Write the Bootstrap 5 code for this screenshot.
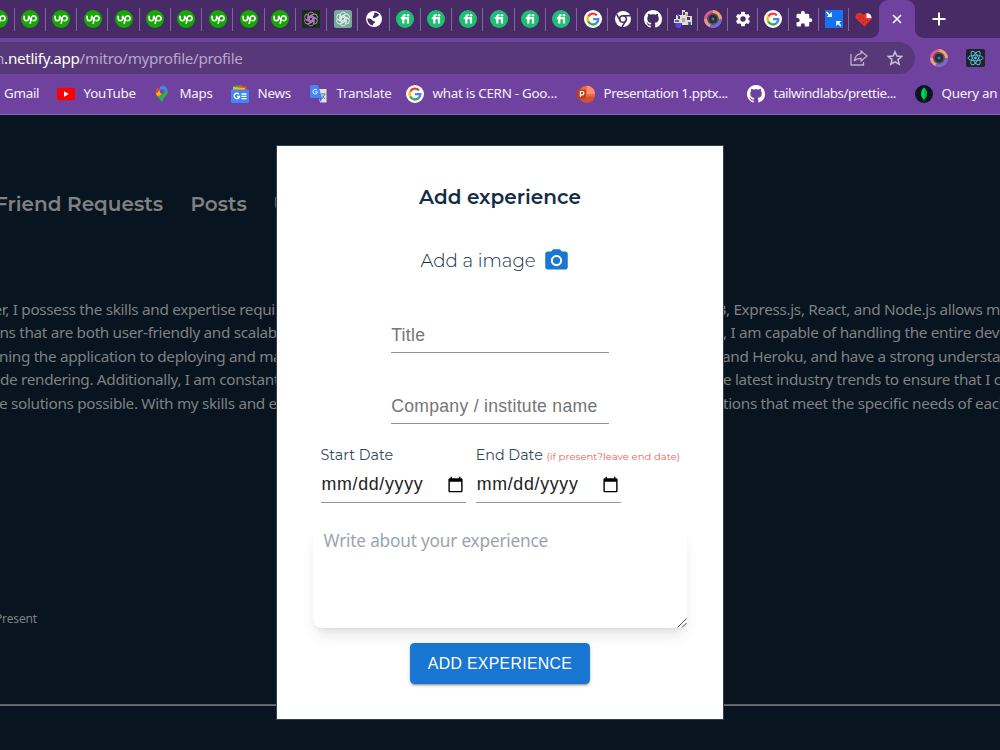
<!DOCTYPE html>
<html lang="en">
<head>
<meta charset="utf-8">
<meta name="viewport" content="width=device-width, initial-scale=1">
<title>Mitro - Profile</title>
<link href="https://cdn.jsdelivr.net/npm/bootstrap@5.3.0/dist/css/bootstrap.min.css" rel="stylesheet">
<style>
  body{width:1000px;height:750px;overflow:hidden;background:#08141f;font-family:"Noto Sans","Open Sans",sans-serif;color:#7f8184}
  svg{display:block;flex:none}
  .mont{font-family:Montserrat,Inter,"Noto Sans",sans-serif}
  .arial{font-family:"Liberation Sans",Arial,sans-serif}
  /* browser chrome */
  .tabstrip{height:38px;background:#472a66}
  .tabstrip .tabs{margin-left:-16.7px}
  .tab-i{width:31.25px;height:38px;position:relative}
  .tab-i.nar{width:30.04px}
  .tab-i::after{content:"";position:absolute;right:0;top:8px;width:1px;height:23px;background:#7d6698}
  .tab-i.last::after{display:none}
  .fav{width:18px;height:18px}
  .active-tab{width:36px;height:38px;background:#6f42a0;border-radius:9px 9px 0 0;position:relative}
  .active-tab::before,.active-tab::after{content:"";position:absolute;bottom:0;width:8px;height:8px}
  .active-tab::before{left:-8px;background:radial-gradient(circle at 0 0,transparent 7.5px,#6f42a0 8px)}
  .active-tab::after{right:-8px;background:radial-gradient(circle at 100% 0,transparent 7.5px,#6f42a0 8px)}
  .newtab{padding-left:17px}
  .toolbar{height:77px;background:#6f42a0;border-bottom:1px solid #8b66b3;padding-top:4px}
  .omni{width:915px;height:32px;background:#573879;border-radius:0 16px 16px 0;font-size:15.2px;color:#b9a5cd;line-height:31px}
  .omni .url{letter-spacing:-.29px;margin-left:-5px}
  .omni b{font-weight:400;color:#fff}
  .omni .host{color:#b9a5cd}
  .omni .acts{gap:19px}
  .marks{display:grid;grid-template-columns:53px 96px 78px 79px 96px 171px 170px 168px 90px;padding-left:4px;height:39px;font-size:13.4px;letter-spacing:-.28px;color:#f7f2fb}
  .marks>div{gap:8.5px}
  .mk2,.mk3{letter-spacing:-.45px}
  .ext-a{margin-left:15px}
  .ext-b{margin-left:18px}
  /* page */
  .page-area{height:635px;position:relative}
  .navrow{height:30px;margin-top:74px;font-size:20px;font-weight:600;line-height:30px}
  .nv1{margin-left:-5px;width:195.5px}
  .nv2{width:83px}
  .bio{margin-top:79px;font-size:15.3px;letter-spacing:-.32px;line-height:23.45px}
  .bio-col{width:277px}
  .cut-1{margin-left:-1px}
  .cut-7{margin-left:-6.5px}
  .cut-10{margin-left:-9.5px}
  .small-note{font-size:12px;line-height:20px;letter-spacing:-.15px;margin:194px 0 0 -5px}
  .small-note.two{margin:20px 0 0 -7px;color:#8a7666}
  .rule{height:2px;margin-top:35px;background:linear-gradient(#4f565d,#777a7d)}
  .dialog-box{left:277px;top:31px;width:446px;height:573px;background:#fff;color:#142c44;outline:1px solid #33404b;outline-offset:-.5px}
  .dlg-title{font-size:20px;font-weight:600;line-height:30px;padding-top:36px}
  .dlg-img{height:28px;font-size:18.2px;font-weight:300;line-height:28px;margin-top:34px;padding-left:143.5px}
  .dlg-img span{width:122.5px;padding-top:1px}
  .field{width:217.5px;height:31px;border-bottom:1px solid #949494;font-size:17.6px;letter-spacing:.28px;color:#757575;line-height:26px}
  .f1{margin-top:48px}
  .f2{margin-top:40px}
  .dates{padding-left:43.5px;gap:9.5px;margin-top:20px}
  .datecol{width:145.7px}
  .datecol label{font-size:14.3px;line-height:23px;height:22px;color:#33475b}
  .datecol em{font-style:normal;font-size:10.1px;color:#e8605c}
  .dateval{height:37px;border-bottom:1px solid #949494;font-size:17.8px;letter-spacing:.7px;color:#212121;padding:0 2px 0 1px}
  .area{margin:24px 0 0 36px;width:374px;height:101px;border-radius:9px;box-shadow:0 10px 15px -3px rgba(0,0,0,.1),0 4px 6px -4px rgba(0,0,0,.1);font-size:17.2px;letter-spacing:-.18px;line-height:26px;color:#9ca3af;padding:1px 0 0 10.5px}
  .area svg{right:0;bottom:0}
  .go{width:180px;height:41px;margin-top:15px;background:#1976d2;border-radius:4.5px;color:#fff;font-size:15.8px;letter-spacing:.35px;box-shadow:0 3px 1px -2px rgba(0,0,0,.2),0 2px 2px rgba(0,0,0,.14),0 1px 5px rgba(0,0,0,.12)}
</style>
</head>
<body>
<svg width="0" height="0" class="position-absolute">
  <defs>
    <symbol id="up" viewBox="0 0 18 18"><circle cx="9" cy="9" r="9" fill="#14a800"/><path d="M3.200 5.800v2.800a2.200 2.200 0 0 0 4.400 0V5.800c.7 2 1.800 4.600 4 4.700M9.100 13.800l1.200-5.500a2.400 2.400 0 1 1 1.700 2.300" fill="none" stroke="#fff" stroke-width="1.600"/></symbol>
    <symbol id="knot" viewBox="0 0 18 18"><g fill="none" stroke="currentColor" stroke-width=".9"><path id="kp" d="M6 11.200V5.200a3.100 3.100 0 0 1 5.600-1.800M7.400 9.900V6.700l4.400-2.600"/><use href="#kp" transform="rotate(60 9 9)"/><use href="#kp" transform="rotate(120 9 9)"/><use href="#kp" transform="rotate(180 9 9)"/><use href="#kp" transform="rotate(240 9 9)"/><use href="#kp" transform="rotate(300 9 9)"/></g></symbol>
    <symbol id="gpt1" viewBox="0 0 18 18"><rect width="18" height="18" fill="#17301b"/><use href="#knot" color="#c77fd0"/></symbol>
    <symbol id="gpt2" viewBox="0 0 18 18"><rect width="18" height="18" rx="2.500" fill="#74a99c"/><use href="#knot" color="#e4f0ee"/></symbol>
    <symbol id="globe" viewBox="0 0 18 18"><circle cx="9" cy="9" r="8" fill="#fff"/><path d="M2.300 8.500c2.500-.3 4.300.4 5 1.800.5 1 2.300.4 2.600 1.700.2 1.200-1.400 1-1.700 2.100l-.5 1.400C4.500 15 2.500 12 2.300 8.500zM9.500 2.500c2 .1 3.700 1 4.800 2.500-1.300.3-1.500 2-3 2-1.200 0-.8 1.400-2.300 1.300-1.300-.2-1.600-1.800-.6-2.500.9-.6 1-1.200.6-2z" fill="#472a66"/></symbol>
    <symbol id="fi" viewBox="0 0 18 18"><circle cx="9" cy="9" r="9" fill="#1dbf73"/><path d="M4.800 8.200h7.200v5.300M7.300 13.500V7c0-1.500.8-2 2.300-1.900" fill="none" stroke="#fff" stroke-width="2.200"/><circle cx="12" cy="5.200" r="1.300" fill="#fff"/></symbol>
    <symbol id="goog" viewBox="0 0 18 18"><circle cx="9" cy="9" r="9" fill="#fff"/><g fill="none" stroke-width="2.300"><path d="M4.300 6.500A5.300 5.300 0 0 1 12.900 5.400" stroke="#ea4335"/><path d="M4.300 6.300a5.400 5.400 0 0 0 0 5.400" stroke="#fbbc05"/><path d="M4.200 11.500a5.400 5.400 0 0 0 8.400 1.600" stroke="#34a853"/><path d="M9 9.100h5.300a5.300 5.300 0 0 1-1.800 4.100" stroke="#4285f4"/></g></symbol>
    <symbol id="chrome" viewBox="0 0 18 18"><circle cx="9" cy="9" r="8" fill="#fff"/><circle cx="9" cy="9" r="3.300" fill="none" stroke="#472a66" stroke-width="1.500"/><path d="M9 5.700h7.600M6.200 10.600 2.600 4.200M11.800 10.600 8 17" stroke="#472a66" stroke-width="1.500"/></symbol>
    <symbol id="gh" viewBox="0 0 16 16"><path fill="#fff" d="M8 0C3.580 0 0 3.580 0 8c0 3.540 2.290 6.530 5.470 7.590.4.070.55-.17.55-.38 0-.19-.01-.82-.01-1.490-2.010.37-2.530-.49-2.690-.94-.09-.23-.48-.94-.82-1.130-.28-.15-.68-.52-.01-.53.63-.01 1.080.58 1.230.82.72 1.210 1.870.87 2.330.66.07-.52.28-.87.51-1.070-1.780-.2-3.640-.89-3.640-3.950 0-.87.31-1.590.82-2.150-.08-.2-.36-1.020.08-2.120 0 0 .67-.21 2.200.82.64-.18 1.320-.27 2-.27s1.360.09 2 .27c1.530-1.040 2.200-.82 2.200-.82.44 1.100.16 1.920.08 2.120.51.56.82 1.270.82 2.150 0 3.070-1.870 3.750-3.650 3.950.29.25.54.73.54 1.480 0 1.070-.01 1.930-.01 2.200 0 .21.15.46.55.38A8.010 8.010 0 0 0 16 8c0-4.420-3.580-8-8-8z"/></symbol>
    <symbol id="people" viewBox="0 0 18 18"><path d="M8 0h3v2h3v4h4v9H8v-2H0V9h2V5h6z" fill="#dcdde2"/><path d="M9 2h2v3H9zM13 7h3v3h-3zM4 6h2v3H4z" fill="#4c4350"/><path d="M1 10h4v2H1zM14 12h3v3h-3z" fill="#4d6a84"/><path d="M8 8h3v4H8zM12 4h2v2h-2z" fill="#c0a389"/><path d="M1.500 13h6v2.500a2.500 2.500 0 0 1-2.500 2.500H4a2.500 2.500 0 0 1-2.500-2.500zM3 4h2v2H3z" fill="#6040e0"/></symbol>
    <symbol id="lens" viewBox="0 0 18 18"><circle cx="9" cy="9" r="7.400" fill="#3a434d" stroke="#e9588c" stroke-width="3"/><path d="M9 1.600A7.400 7.400 0 0 1 16.400 9" fill="none" stroke="#efa36d" stroke-width="3"/><path d="M16.400 9A7.400 7.400 0 0 1 6 15.700" fill="none" stroke="#716ad4" stroke-width="3"/><path d="M6 15.700A7.400 7.400 0 0 1 1.600 9" fill="none" stroke="#e59a91" stroke-width="3"/><circle cx="9" cy="9" r="5" fill="#26303a" stroke="#59646e"/><circle cx="9" cy="9" r="1.500" fill="#56738e"/></symbol>
    <symbol id="gear" viewBox="0 0 24 24"><path fill="#fff" d="M19.140 12.940c.04-.3.060-.61.060-.94s-.02-.64-.07-.94l2.030-1.580a.49.49 0 0 0 .12-.61l-1.920-3.320a.49.49 0 0 0-.59-.22l-2.390.96a7 7 0 0 0-1.620-.94l-.36-2.540a.48.48 0 0 0-.48-.41h-3.840a.47.47 0 0 0-.47.41l-.36 2.540a7.300 7.300 0 0 0-1.620.94l-2.390-.96a.47.47 0 0 0-.59.220L2.740 8.870a.47.47 0 0 0 .12.610l2.030 1.580a6 6 0 0 0 0 1.880l-2.030 1.580a.49.49 0 0 0-.12.610l1.920 3.320c.12.220.37.290.59.220l2.390-.96c.5.380 1.030.700 1.620.94l.36 2.540c.05.240.24.410.48.410h3.840c.24 0 .44-.17.470-.41l.36-2.540a7 7 0 0 0 1.620-.94l2.390.96c.220.080.470 0 .59-.22l1.920-3.320a.47.470 0 0 0-.12-.61zM12 15.600a3.600 3.600 0 1 1 0-7.200 3.600 3.600 0 0 1 0 7.200z"/></symbol>
    <symbol id="puzzle" viewBox="0 0 24 24"><path fill="#fff" d="M20.500 11H19V7a2 2 0 0 0-2-2h-4V3.500a2.500 2.500 0 0 0-5 0V5H4a2 2 0 0 0-2 2v3.800h1.500a2.700 2.700 0 0 1 0 5.400H2V20c0 1.100.9 2 2 2h3.800v-1.500a2.700 2.700 0 0 1 5.400 0V22H17a2 2 0 0 0 2-2v-4h1.500a2.500 2.500 0 0 0 0-5z"/></symbol>
    <symbol id="shrink" viewBox="0 0 18 18"><rect width="18" height="18" fill="#1473f4"/><path d="m1.500 2 3.500 3.500M16 16l-3.500-3.500" stroke="#fff" stroke-width="1.600"/><path d="M6.800 2v5H1.800zM11.200 16v-5h5z" fill="#fff"/></symbol>
    <symbol id="heart" viewBox="0 0 18 18"><path d="M9.500 16.500 1.200 8.800C-.5 6.500 1 3 4 3c2 0 3.500.5 5 2l2.200-2.400 6 5.800z" fill="#e5322d"/><path d="M11.500 3.300c2.500-.6 5 1.500 5 4.600h-5z" fill="#fff"/><path d="M4 6h.1M7 6h.1M5.500 8h.1M8.500 8h.1M4 9h.1M7 10h.1M10 10.500h.1M8.500 12.500h.1M12.500 10.500h.1" stroke="#8f1512" stroke-width="1" stroke-linecap="round"/></symbol>
    <symbol id="cal" viewBox="0 0 24 24"><path d="M20 3h-1V1h-2v2H7V1H5v2H4c-1.100 0-2 .9-2 2v16c0 1.100.9 2 2 2h16c1.100 0 2-.9 2-2V5c0-1.100-.9-2-2-2zm0 18H4V8h16v13z"/></symbol>
  </defs>
</svg>

<header>
  <div class="tabstrip d-flex">
    <div class="tabs d-flex flex-shrink-0" id="tabs"></div>
    <div class="active-tab d-flex align-items-center justify-content-center flex-shrink-0">
      <svg width="10" height="10" viewBox="0 0 10 10"><path d="m1 1 8 8M9 1 1 9" stroke="#fff" stroke-width="1.600"/></svg>
    </div>
    <div class="newtab d-flex align-items-center">
      <svg width="14" height="14" viewBox="0 0 14 14"><path d="M7 .5v13M.5 7h13" stroke="#fff" stroke-width="2"/></svg>
    </div>
  </div>
  <div class="toolbar">
    <div class="d-flex align-items-center">
      <div class="omni d-flex align-items-center justify-content-between text-nowrap flex-shrink-0">
        <span class="url"><b><span class="host">n</span>.netlify.app</b>/mitro/myprofile/profile</span>
        <span class="acts d-flex align-items-center me-2 pe-1">
          <svg width="18" height="16" viewBox="0 0 18 16" fill="none" stroke="#bcaecb" stroke-width="1.300"><path d="M1 4v11h12.500v-3"/><path d="M11 1l6 5-6 5V8.300C7.500 8.200 5.600 9.200 4.200 11.200 4.800 7 7 4.200 11 3.700z"/></svg>
          <svg width="16" height="16" viewBox="0 0 17 16" fill="none" stroke="#cbbfd8" stroke-width="1.600"><path d="m8.500 1.400 2 4.600 5 .4-3.800 3.300 1.200 4.900-4.400-2.600-4.400 2.600 1.200-4.900L1.500 6.400l5-.4z"/></svg>
        </span>
      </div>
      <svg class="ext-a" width="18" height="18"><use href="#lens"/></svg>
      <svg class="ext-b" width="19" height="18" viewBox="0 0 19 18"><rect width="19" height="18" rx="2" fill="#20232a"/><g fill="none" stroke="#5cc3e0" stroke-width=".9"><ellipse cx="9.500" cy="9" rx="7.500" ry="2.800"/><ellipse cx="9.500" cy="9" rx="7.500" ry="2.800" transform="rotate(60 9.500 9)"/><ellipse cx="9.500" cy="9" rx="7.500" ry="2.800" transform="rotate(120 9.500 9)"/></g><circle cx="9.500" cy="9" r="1.400" fill="#5cc3e0"/></svg>
    </div>
    <div class="marks text-nowrap">
      <div class="d-flex align-items-center">Gmail</div>
      <div class="d-flex align-items-center"><svg width="18" height="18" viewBox="0 0 18 18"><rect y="2.800" width="18" height="12.500" rx="2.500" fill="#f00"/><path d="m7 6.300 4.800 2.700L7 11.800z" fill="#fff"/></svg>YouTube</div>
      <div class="d-flex align-items-center"><svg width="18" height="18" viewBox="0 0 18 18"><path d="M4.300 11C3 9 2.700 8 2.900 6.200L9 7z" fill="#fbbc04"/><path d="M9 17c.6 0 .8-2.200 2.200-4.100C13.500 10.200 15 8.800 15 6.500L12.700 2 4.300 11c2.600 2.900 3.600 6 4.700 6z" fill="#34a853"/><path d="M9 .5a6.100 6.100 0 0 1 5.500 3.600L4.300 11c4-4 .5-9 4.700-10.500z" fill="#4285f4"/><path d="M4.500 2.500 8 5.500 4 10 2.900 6.400c0-1.500.6-2.900 1.600-3.900z" fill="#ea4335"/><path d="m3.400 8.800 3.300-3.500 2.800 3.200-5 3z" fill="#fbbc04"/><circle cx="9" cy="6.500" r="2.200" fill="#7048a0"/></svg>Maps</div>
      <div class="d-flex align-items-center"><svg width="18" height="18" viewBox="0 0 18 18"><path d="M2 1l9-1 1 4H2z" fill="#34a853"/><path d="M8 1l8 .5-1 4H7z" fill="#ea4335"/><path d="M2 2l12 1v3H2z" fill="#fbbc04"/><rect y="4.500" width="18" height="13.500" rx="1" fill="#4285f4"/><path d="M8 9.300A2.700 2.700 0 1 0 8.500 11.500H6M10.500 9h5M10.500 11.300h5M10.500 13.600h5" fill="none" stroke="#fff" stroke-width="1.300"/></svg>News</div>
      <div class="d-flex align-items-center"><svg width="18" height="18" viewBox="0 0 18 18"><path d="M7 4h9.500v13.500H10z" fill="#dfe1e5"/><path d="M10.500 9h5M13 8v1M12 14l3-5M12 10.500l3 3.500" stroke="#717b87" fill="none"/><path d="M0 1.500C0 .6.600 0 1.500 0H8l4 13H1.500A1.500 1.500 0 0 1 0 11.500z" fill="#4285f4"/><path d="m9 13 3 0-1 4z" fill="#3367d6"/><path d="M7 5.200A2.300 2.300 0 1 0 7.500 7H5.300" fill="none" stroke="#fff"/></svg>Translate</div>
      <div class="d-flex align-items-center"><svg width="18" height="18"><use href="#goog"/></svg><span>what is CERN - Goo...</span></div>
      <div class="d-flex align-items-center"><svg width="18" height="18" viewBox="0 0 18 18"><circle cx="9.800" cy="9" r="8.200" fill="#ed6c47"/><path d="M9.800.8A8.200 8.200 0 0 1 18 9H9.800z" fill="#ff8f6b"/><path d="M2 11.500h16a8.200 8.200 0 0 1-15.500 1.300z" fill="#d35230"/><rect y="4.500" width="9" height="9" rx=".8" fill="#c43e1c"/><path d="M3.400 11.800V6.500h1.800a1.600 1.600 0 0 1 0 3.300H3.400" fill="none" stroke="#fff" stroke-width="1.200"/></svg><span class="mk2">Presentation 1.pptx...</span></div>
      <div class="d-flex align-items-center"><svg width="18" height="18"><use href="#gh"/></svg><span class="mk3">tailwindlabs/prettie...</span></div>
      <div class="d-flex align-items-center"><svg width="18" height="18" viewBox="0 0 18 18"><circle cx="9" cy="9" r="9" fill="#061724"/><path d="M9 2.500c4 4 4 8.500.4 11.500L9.200 16h-.5l-.2-2C5 11 5.500 6 9 2.500z" fill="#00df54"/><path d="M9 2.500c4 4 4 8.500.2 11.500z" fill="#00b548"/></svg>Query an</div>
    </div>
  </div>
</header>

<main class="page-area overflow-hidden">
  <nav class="navrow mont d-flex text-nowrap">
    <span class="nv1">Friend Requests</span>
    <span class="nv2">Posts</span>
    <span>Users</span>
  </nav>
  <section class="bio d-flex justify-content-between text-nowrap">
    <div class="bio-col overflow-hidden">
      <div class="cut-7">er, I possess the skills and expertise required</div>
      <div class="cut-10">ons that are both user-friendly and scalable</div>
      <div class="cut-1">ning the application to deploying and maintaining</div>
      <div>de rendering. Additionally, I am constantly</div>
      <div class="cut-1">e solutions possible. With my skills and expertise</div>
    </div>
    <div class="bio-col overflow-hidden">
      <div class="cut-7">B, Express.js, React, and Node.js allows me to</div>
      <div>, I am capable of handling the entire development</div>
      <div class="cut-1">and Heroku, and have a strong understanding</div>
      <div>e latest industry trends to ensure that I can</div>
      <div>tions that meet the specific needs of each</div>
    </div>
  </section>
  <div class="small-note">Present</div>
  <div class="small-note two">d</div>
  <div class="rule"></div>

  <section class="dialog-box position-absolute">
    <h1 class="dlg-title mont text-center mb-0">Add experience</h1>
    <div class="dlg-img mont d-flex align-items-center"><span>Add a image</span>
      <svg width="27" height="27" viewBox="0 0 24 24" fill="#1976d2"><circle cx="12" cy="12" r="3.200"/><path d="M9 2 7.170 4H4c-1.100 0-2 .9-2 2v12c0 1.100.9 2 2 2h16c1.100 0 2-.9 2-2V6c0-1.100-.9-2-2-2h-3.170L15 2H9zm3 15c-2.760 0-5-2.240-5-5s2.240-5 5-5 5 2.240 5 5-2.240 5-5 5z"/></svg>
    </div>
    <div class="field f1 arial mx-auto">Title</div>
    <div class="field f2 arial mx-auto">Company / institute name</div>
    <div class="dates d-flex text-nowrap">
      <div class="datecol"><label class="mont d-block">Start Date</label>
        <div class="dateval arial d-flex align-items-center justify-content-between"><span>mm/dd/yyyy</span><svg width="17" height="17"><use href="#cal"/></svg></div></div>
      <div class="datecol"><label class="mont d-block">End Date <em>(if present?leave end date)</em></label>
        <div class="dateval arial d-flex align-items-center justify-content-between"><span>mm/dd/yyyy</span><svg width="17" height="17"><use href="#cal"/></svg></div></div>
    </div>
    <div class="area position-relative">Write about your experience
      <svg class="position-absolute" width="10" height="10" viewBox="0 0 10 10"><path d="M.5 9.500l9-9M5 9.500l4.500-4.500" stroke="#555" stroke-width="1"/></svg>
    </div>
    <div class="go arial mx-auto d-flex align-items-center justify-content-center">ADD EXPERIENCE</div>
  </section>
</main>
<script>
  // open tabs, left to right
  const icons = [...Array(10).fill('up'), 'gpt1', 'gpt2', 'globe', ...Array(6).fill('fi'), 'goog',
    'chrome', 'gh', 'people', 'lens', 'gear', 'goog', 'puzzle', 'shrink', 'heart'];
  document.getElementById('tabs').innerHTML = icons.map((n, i) =>
    `<div class="tab-i d-flex align-items-center justify-content-center flex-shrink-0 ${i > 19 ? 'nar' : ''} ${i === icons.length - 1 ? 'last' : ''}"><svg class="fav"><use href="#${n}"/></svg></div>`).join('');
</script>
<script src="https://cdn.jsdelivr.net/npm/bootstrap@5.3.0/dist/js/bootstrap.bundle.min.js"></script>
</body>
</html>
